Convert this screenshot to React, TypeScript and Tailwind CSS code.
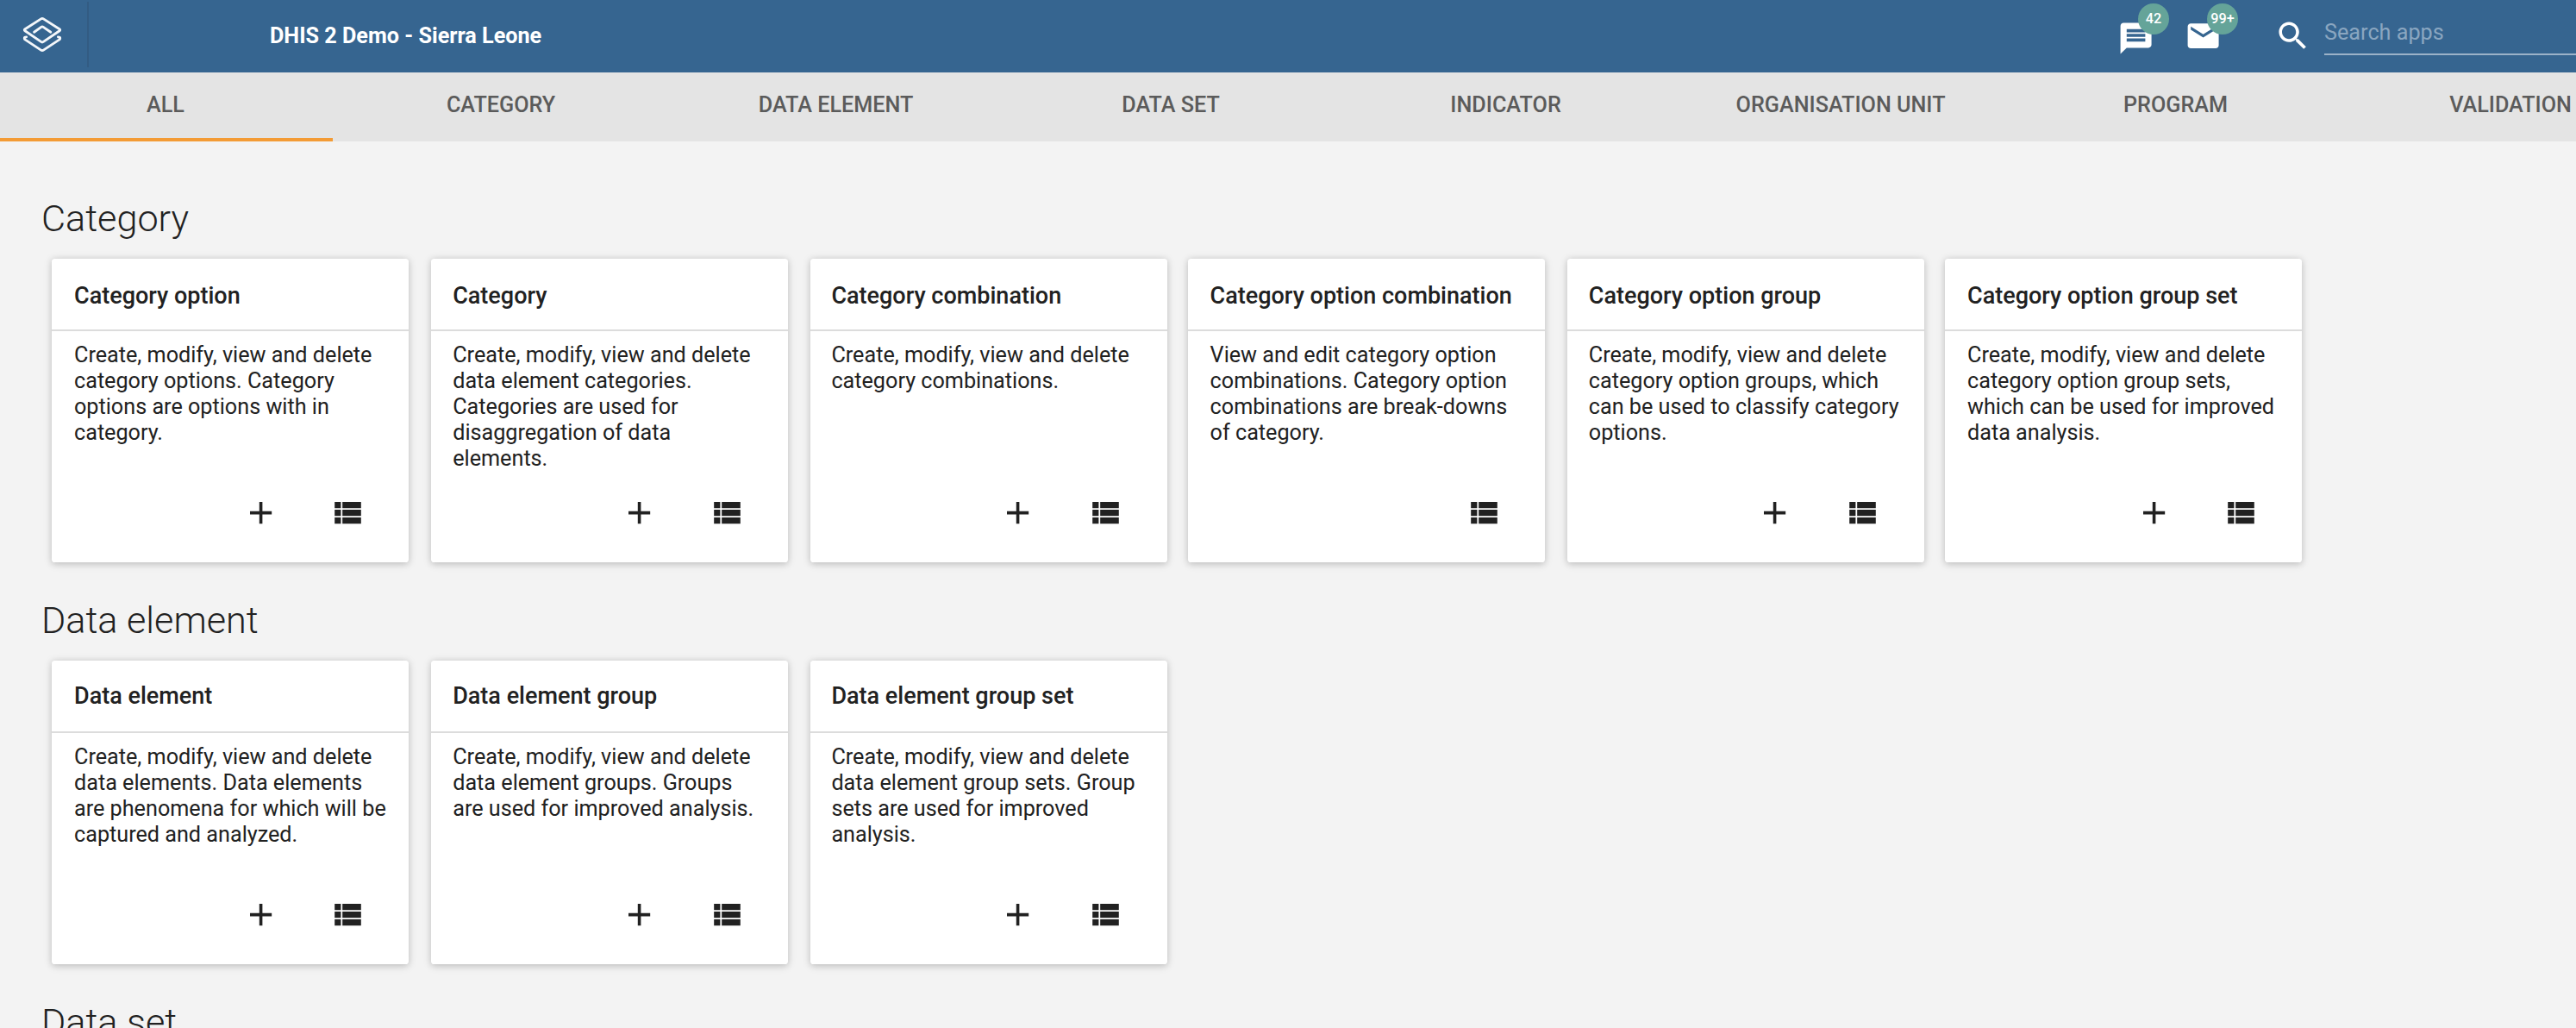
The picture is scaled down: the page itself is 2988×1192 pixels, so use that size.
import React from "react";

type Item = { title: string; text: string; add?: boolean };

const tabs = [
  "ALL",
  "CATEGORY",
  "DATA ELEMENT",
  "DATA SET",
  "INDICATOR",
  "ORGANISATION UNIT",
  "PROGRAM",
  "VALIDATION",
];

const categoryItems: Item[] = [
  { title: "Category option", text: "Create, modify, view and delete category options. Category options are options with in category.", add: true },
  { title: "Category", text: "Create, modify, view and delete data element categories. Categories are used for disaggregation of data elements.", add: true },
  { title: "Category combination", text: "Create, modify, view and delete category combinations.", add: true },
  { title: "Category option combination", text: "View and edit category option combinations. Category option combinations are break-downs of category." },
  { title: "Category option group", text: "Create, modify, view and delete category option groups, which can be used to classify category options.", add: true },
  { title: "Category option group set", text: "Create, modify, view and delete category option group sets, which can be used for improved data analysis.", add: true },
];

const dataElementItems: Item[] = [
  { title: "Data element", text: "Create, modify, view and delete data elements. Data elements are phenomena for which will be captured and analyzed.", add: true },
  { title: "Data element group", text: "Create, modify, view and delete data element groups. Groups are used for improved analysis.", add: true },
  { title: "Data element group set", text: "Create, modify, view and delete data element group sets. Group sets are used for improved analysis.", add: true },
];

// Horizontal insets of a card's content, by column.
const insets = [
  { left: "pl-[26px]", right: "mr-[49.5px]" },
  { left: "pl-[25.2px]", right: "mr-[50.3px]" },
  { left: "pl-[24.4px]", right: "mr-[51.1px]" },
  { left: "pl-[25.6px]", right: "mr-[49.9px]" },
  { left: "pl-[24.8px]", right: "mr-[50.7px]" },
  { left: "pl-[26px]", right: "mr-[49.5px]" },
];

function Icon({ d }: { d: string }) {
  return (
    <svg viewBox="0 0 24 24" className="block size-[43.2px] shrink-0 fill-current">
      <path d={d} />
    </svg>
  );
}

const ADD = "M19 13h-6v6h-2v-6H5v-2h6V5h2v6h6v2z";
const LIST =
  "M4 14h4v-4H4v4zm0 5h4v-4H4v4zM4 9h4V5H4v4zm5 5h12v-4H9v4zm0 5h12v-4H9v4zM9 5v4h12V5H9z";
const MESSAGE =
  "M20 2H4c-1.1 0-1.99.9-1.99 2L2 22l4-4h14c1.1 0 2-.9 2-2V4c0-1.1-.9-2-2-2zm-2 12H6v-2h12v2zm0-3H6V9h12v2zm0-3H6V6h12v2z";
const MAIL =
  "M20 4H4c-1.1 0-1.99.9-1.99 2L2 18c0 1.1.9 2 2 2h16c1.1 0 2-.9 2-2V6c0-1.1-.9-2-2-2zm0 4l-8 5-8-5V6l8 5 8-5v2z";
const SEARCH =
  "M15.5 14h-.79l-.28-.27C15.41 12.59 16 11.11 16 9.5 16 5.91 13.09 3 9.5 3S3 5.91 3 9.5 5.91 16 9.5 16c1.61 0 3.09-.59 4.23-1.57l.27.28v.79l5 4.99L20.49 19l-4.99-5zm-6 0C7.01 14 5 11.99 5 9.5S7.01 5 9.5 5 14 7.01 14 9.5 11.99 14 9.5 14z";

function Logo() {
  return (
    <svg
      viewBox="0 0 46 42"
      className="block h-[42px] w-[46px]"
      fill="none"
      stroke="#f4f7fa"
      strokeWidth="2.9"
      strokeLinejoin="round"
      strokeLinecap="round"
    >
      <path d="M21.6 2.9 Q23 2 24.4 2.9 L43 14.8 Q44.4 15.8 43 16.8 L24.4 29.4 Q23 30.4 21.6 29.4 L3 16.8 Q1.6 15.8 3 14.8 Z" />
      <path d="M13.6 18.2 L21.8 12.4 Q23 11.6 24.2 12.4 L32.8 18.2" />
      <path d="M4.6 23.9 Q2.2 24 2.3 25.4 Q2.3 26.4 3.4 27.1 L21.6 39.1 Q23 40.1 24.4 39.1 L42.6 27.1 Q43.7 26.4 43.7 25.4 Q43.8 24 41.4 23.9" />
    </svg>
  );
}

function Badge({ children }: { children: React.ReactNode }) {
  return (
    <span className="flex size-9 items-center justify-center rounded-full bg-[#65a499] text-[16.2px] leading-none font-medium">
      {children}
    </span>
  );
}

function Card({ item, column, titlePad }: { item: Item; column: number; titlePad: string }) {
  const inset = insets[column];
  return (
    <article className="flex h-[352px] w-[414px] flex-col rounded-[3.6px] bg-white shadow-[0_1.8px_10.8px_rgba(0,0,0,0.12),0_1.8px_7.2px_rgba(0,0,0,0.12)]">
      <h3
        className={`flex h-[84px] items-center whitespace-nowrap border-b-2 border-[#dcdcdc] text-[27px] font-medium ${inset.left} ${titlePad}`}
      >
        {item.title}
      </h3>
      <p className={`pt-[13px] pr-6 text-[25.2px] leading-[30px] ${inset.left}`}>{item.text}</p>
      <div className={`mt-auto mb-[35.8px] flex justify-end gap-[57.6px] ${inset.right}`}>
        {item.add && <Icon d={ADD} />}
        <Icon d={LIST} />
      </div>
    </article>
  );
}

function Section({ title, items, titlePad = "pt-px" }: { title: string; items: Item[]; titlePad?: string }) {
  return (
    <section className="h-[466px] pl-12">
      <h2 className="h-[86px] pt-[14px] text-[43.2px] leading-[51px] font-light">{title}</h2>
      <div className="grid grid-cols-[440px_440px_438px_440px_438px_414px] pl-3">
        {items.map((item, i) => (
          <Card key={item.title} item={item} column={i} titlePad={titlePad} />
        ))}
      </div>
    </section>
  );
}

export default function App() {
  return (
    <div className="h-[1192px] w-[2988px] overflow-hidden bg-[#f3f3f3] font-['Roboto',sans-serif] text-[#212121]">
      <header className="flex h-[84px] bg-[#366590] text-white">
        <div className="mt-0.5 flex h-[76px] w-[103px] justify-start border-r-2 border-[#335c83] pt-[17px] pl-[26px]">
          <Logo />
        </div>
        <div className="pt-[27px] pl-[210px] text-[25.2px] leading-[30px] font-bold">
          DHIS 2 Demo - Sierra Leone
        </div>
        <div className="ml-auto flex w-[532.3px]">
          <div className="relative mt-[23.4px] h-[43.2px]">
            <Icon d={MESSAGE} />
            <div className="absolute -top-[19.4px] left-[24.3px]">
              <Badge>42</Badge>
            </div>
          </div>
          <div className="relative mt-[19.8px] ml-[34.8px] h-[43.2px]">
            <Icon d={MAIL} />
            <div className="absolute -top-[15.8px] left-[26.3px]">
              <Badge>99+</Badge>
            </div>
          </div>
          <div className="ml-[61px] flex gap-[15px]">
            <div className="mt-[19.6px]">
              <Icon d={SEARCH} />
            </div>
            <div className="h-16 w-[320px] border-b-2 border-[#9bb2c8] pt-[23px] text-[25.2px] leading-[30px] text-[#8aa6c0]">
              Search apps
            </div>
          </div>
        </div>
      </header>
      <nav className="flex h-20 bg-[#e4e4e4] text-[25.2px] font-medium text-[#5b5b5b]">
        {tabs.map((tab, i) => (
          <div
            key={tab}
            className={
              i === 0
                ? "flex w-[386px] shrink-0 justify-center border-b-4 border-[#f39b35] pt-[23px] pr-[2px] leading-[30px]"
                : i === 1
                  ? "ml-[0.8px] flex w-[388.5px] shrink-0 justify-center pt-[23px] leading-[30px]"
                  : "flex w-[388.5px] shrink-0 justify-center pt-[23px] leading-[30px]"
            }
          >
            {tab}
          </div>
        ))}
      </nav>
      <main className="pt-[50px]">
        <Section title="Category" items={categoryItems} titlePad="pt-[5px]" />
        <Section title="Data element" items={dataElementItems} />
        <Section title="Data set" items={[]} />
      </main>
    </div>
  );
}
